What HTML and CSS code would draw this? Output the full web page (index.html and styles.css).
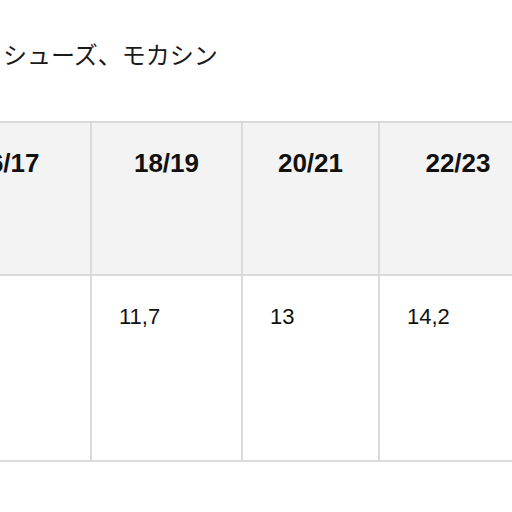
FILE: index.html
```html
<!DOCTYPE html>
<html lang="ja">
<head>
<meta charset="utf-8">
<link rel="stylesheet" href="styles.css">
</head>
<body>
<h2 class="title">シューズ、モカシン</h2>
<div class="table-wrap">
  <table class="size-table">
    <colgroup>
      <col class="c1"><col class="c2"><col class="c3"><col class="c4">
    </colgroup>
    <thead>
      <tr><th>16/17</th><th>18/19</th><th>20/21</th><th>22/23</th></tr>
    </thead>
    <tbody>
      <tr><td>10,4</td><td>11,7</td><td>13</td><td>14,2</td></tr>
    </tbody>
  </table>
</div>
</body>
</html>
```
FILE: styles.css
```css
html, body {
  margin: 0;
  padding: 0;
  background: #ffffff;
}
body {
  font-family: "Liberation Sans", Arial, "Noto Sans CJK JP", sans-serif;
  color: #111111;
}
.title {
  margin: 38px 0 0 3px;
  font-family: "Noto Sans CJK JP", sans-serif;
  font-weight: 400;
  font-size: 24px;
  line-height: 32px;
  color: #1a1a1a;
}
.table-wrap {
  margin-top: 51px;
  overflow: hidden;
  width: 512px;
}
.size-table {
  table-layout: fixed;
  border-collapse: separate;
  border-spacing: 0;
  width: 614px;
  margin-left: -76px;
  border-top: 2px solid #dadada;
}
.c1 { width: 168px; }
.c2 { width: 151px; }
.c3 { width: 137px; }
.c4 { width: 158px; }
.size-table th,
.size-table td {
  border-right: 2px solid #dadada;
  border-bottom: 2px solid #dadada;
  vertical-align: top;
  box-sizing: border-box;
}
.size-table th {
  background: #f3f3f3;
  height: 153px;
  padding: 25px 0 0 0;
  font-size: 26px;
  font-weight: 700;
  text-align: center;
  color: #111111;
}
.size-table td {
  height: 186px;
  padding: 28px 26px 0 27px;
  font-size: 22px;
  font-weight: 400;
  text-align: left;
  color: #111111;
}
```
